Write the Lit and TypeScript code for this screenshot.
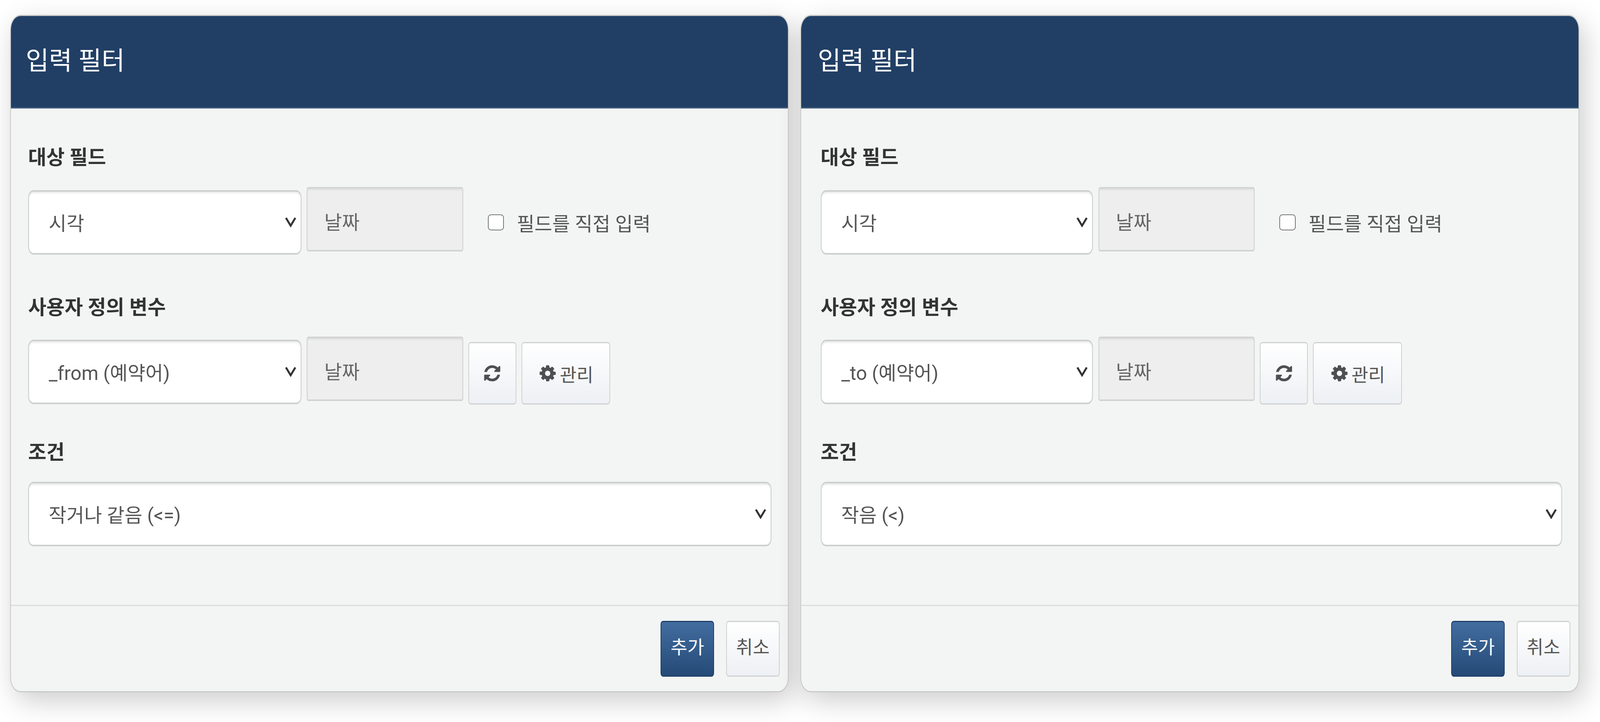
import { LitElement, html, css, svg } from "lit";
import { customElement, property } from "lit/decorators.js";

const refreshIcon = svg`<path d="M1639 1056q0 5-1 7-64 268-268 434.5t-478 166.5q-146 0-282.5-55t-243.5-157l-129 129q-19 19-45 19t-45-19-19-45v-448q0-26 19-45t45-19h448q26 0 45 19t19 45-19 45l-137 137q71 66 161 102t187 36q134 0 250-65t186-179q11-17 53-117 8-23 30-23h192q13 0 22.5 9.5t9.5 22.5zm25-800v448q0 26-19 45t-45 19h-448q-26 0-45-19t-19-45 19-45l138-138q-148-137-349-137-134 0-250 65t-186 179q-11 17-53 117-8 23-30 23h-199q-13 0-22.5-9.5t-9.5-22.5v-7q65-268 270-434.5t480-166.5q146 0 284 55.5t245 156.5l130-129q19-19 45-19t45 19 19 45z"/>`;
const cogIcon = svg`<path d="M1152 896q0-106-75-181t-181-75-181 75-75 181 75 181 181 75 181-75 75-181zm512-109v222q0 12-8 23t-20 13l-185 28q-19 54-39 91 35 50 107 138 10 12 10 25t-9 23q-27 37-99 108t-94 71q-12 0-26-9l-138-108q-44 23-91 38-16 136-29 186-7 28-36 28h-222q-14 0-24.5-8.5t-11.5-21.5l-28-184q-49-16-90-37l-141 107q-10 9-25 9-14 0-25-11-126-114-165-168-7-10-7-23 0-12 8-23 15-21 51-66.5t54-70.5q-27-50-41-99l-183-27q-13-2-21-12.5t-8-23.5v-222q0-12 8-23t19-13l186-28q14-46 39-92-40-57-107-138-10-12-10-24 0-10 9-23 26-36 98.5-107.5t94.5-71.5q13 0 26 10l138 107q44-23 91-38 16-136 29-186 7-28 36-28h222q14 0 24.5 8.5t11.5 21.5l28 184q49 16 90 37l142-107q9-9 24-9 13 0 25 10 129 119 165 170 7 8 7 22 0 12-8 23-15 21-51 66.5t-54 70.5q26 50 41 98l183 28q13 2 21 12.5t8 23.5z"/>`;

@customElement("filter-card")
class FilterCard extends LitElement {
  @property() variable = "";
  @property() condition = "";

  static styles = css`
    :host {
      --u: calc(100vw / 5966);
      --pad: calc(64 * var(--u));
      --sel: calc(1020 * var(--u));
      --gap: calc(19 * var(--u));
      --title: calc(55 * var(--u));
      display: flex;
      flex: none;
      flex-direction: column;
      box-sizing: border-box;
      width: calc(2903 * var(--u));
      height: 1735px;
      background: #f3f5f4;
      border-style: solid;
      border-color: #c9c9c9;
      border-width: 3px calc(3 * var(--u));
      border-radius: calc(38 * var(--u)) / 38px;
      box-shadow: calc(18 * var(--u)) 22px 70px rgba(0, 0, 0, 0.2);
      overflow: hidden;
      font-family: Roboto, "Noto Sans CJK KR", sans-serif;
    }
    :host([second]) {
      --pad: calc(73 * var(--u));
      --sel: calc(1015 * var(--u));
      --gap: calc(21 * var(--u));
      --title: calc(62 * var(--u));
      width: calc(2905 * var(--u));
    }
    .head {
      height: 237px;
      flex: none;
      box-sizing: border-box;
      background: #213f65;
      border-bottom: 3px solid #4a6485;
      color: #fff;
      font-size: calc(94 * var(--u));
      line-height: 230px;
      padding-left: var(--title);
    }
    .body {
      flex: 1;
      padding: 80px calc(61 * var(--u)) 0 var(--pad);
    }
    label.title {
      display: block;
      font-size: calc(74 * var(--u));
      font-weight: 700;
      padding-top: 12px;
      line-height: 68px;
      color: #333;
    }
    .row {
      display: flex;
      align-items: flex-start;
      margin-top: 41px;
      margin-bottom: 90px;
    }
    .row.tools {
      margin-top: 40px;
      margin-bottom: 77px;
    }
    .selwrap {
      position: relative;
      flex: none;
      width: var(--sel);
      margin-top: 8px;
      height: 165px;
    }
    .selwrap.full {
      width: auto;
      margin-top: 41px;
    }
    select {
      appearance: none;
      width: 100%;
      height: 100%;
      box-sizing: border-box;
      background: #fff;
      border-style: solid;
      border-color: #cdcfcf;
      border-width: 4px calc(4 * var(--u));
      border-radius: calc(20 * var(--u)) / 20px;
      box-shadow: inset 0 4px 4px rgba(0, 0, 0, 0.08);
      padding: 6px calc(80 * var(--u)) 0 calc(74 * var(--u));
      font-family: inherit;
      font-size: calc(72 * var(--u));
      color: #555;
    }
    .chev {
      position: absolute;
      right: calc(20 * var(--u));
      top: 68px;
      width: calc(41 * var(--u));
      height: 27px;
      fill: none;
      stroke: #333;
      stroke-width: 5;
      pointer-events: none;
    }
    .chev path {
      vector-effect: non-scaling-stroke;
    }
    input.val {
      box-sizing: border-box;
      flex: none;
      width: calc(583 * var(--u));
      height: 165px;
      margin-left: var(--gap);
      background: #eee;
      border-style: solid;
      border-color: #d2d3d3;
      border-width: 4px calc(4 * var(--u));
      border-radius: calc(7 * var(--u)) / 7px;
      box-shadow: inset 0 4px 4px rgba(0, 0, 0, 0.06);
      padding: 8px calc(62 * var(--u)) 0;
      font-family: inherit;
      font-size: calc(72 * var(--u));
      color: #666;
    }
    .check {
      display: flex;
      align-items: center;
      flex: none;
      margin: 8px 0 0 calc(92 * var(--u));
      height: 165px;
      font-size: calc(72 * var(--u));
      color: #555;
      white-space: nowrap;
    }
    .check input {
      appearance: none;
      flex: none;
      box-sizing: border-box;
      width: calc(60 * var(--u));
      height: calc(60 * var(--u));
      margin: 0 calc(48 * var(--u)) 0 0;
      background: #fff;
      border: calc(4 * var(--u)) solid #767676;
      border-radius: calc(12 * var(--u));
    }
    .btn {
      box-sizing: border-box;
      display: inline-flex;
      flex: none;
      align-items: center;
      justify-content: center;
      background: linear-gradient(#fff, #edf0f4);
      border-style: solid;
      border-color: #d0d1d1;
      border-width: 3px calc(3 * var(--u));
      border-radius: calc(9 * var(--u)) / 9px;
      color: #555;
      font-family: inherit;
      font-size: calc(68 * var(--u));
      padding: 0;
      white-space: nowrap;
    }
    .btn svg {
      fill: #4d4f50;
      flex: none;
      width: calc(70 * var(--u));
      height: calc(70 * var(--u));
    }
    .tool {
      margin: 14px 0 0 calc(19 * var(--u));
      height: 160px;
    }
    .tool.refresh {
      width: calc(179 * var(--u));
    }
    .tool.manage {
      width: calc(332 * var(--u));
      gap: calc(10 * var(--u));
    }
    .foot {
      flex: none;
      box-sizing: border-box;
      height: 221px;
      border-top: 3px solid #dcdddd;
      display: flex;
      justify-content: flex-end;
      gap: calc(44 * var(--u));
      padding: 38px calc(31 * var(--u)) 0 0;
    }
    .foot .btn {
      width: calc(200 * var(--u));
      height: 143px;
      padding-bottom: 16px;
    }
    .foot .btn.primary {
      background: linear-gradient(#426d9f, #254a77);
      border-color: #20406a;
      color: #fff;
    }
  `;

  private chevron() {
    return html`<svg class="chev" viewBox="0 0 41 27" preserveAspectRatio="none"><path d="M3 3 L20.5 23 L38 3" /></svg>`;
  }

  render() {
    return html`
      <div class="head">입력 필터</div>
      <div class="body">
        <label class="title">대상 필드</label>
        <div class="row">
          <div class="selwrap">
            <select><option>시각</option></select>${this.chevron()}
          </div>
          <input class="val" type="text" readonly value="날짜" />
          <label class="check"><input type="checkbox" />필드를 직접 입력</label>
        </div>
        <label class="title">사용자 정의 변수</label>
        <div class="row tools">
          <div class="selwrap">
            <select><option>${this.variable}</option></select>${this.chevron()}
          </div>
          <input class="val" type="text" readonly value="날짜" />
          <button class="btn tool refresh">
            <svg viewBox="0 0 1792 1792">${refreshIcon}</svg>
          </button>
          <button class="btn tool manage">
            <svg viewBox="0 0 1792 1792">${cogIcon}</svg>관리
          </button>
        </div>
        <label class="title">조건</label>
        <div class="selwrap full">
          <select><option>${this.condition}</option></select>${this.chevron()}
        </div>
      </div>
      <div class="foot">
        <button class="btn primary">추가</button>
        <button class="btn">취소</button>
      </div>
    `;
  }
}

@customElement("app-root")
class AppRoot extends LitElement {
  static styles = css`
    :host {
      --u: calc(100vw / 5966);
      display: block;
      background: #fff;
      height: 1849px;
      overflow: hidden;
    }
    .wrap {
      display: flex;
      gap: calc(43 * var(--u));
      padding: 38px 0 0 calc(38 * var(--u));
    }
  `;
  render() {
    return html`
      <div class="wrap">
        <filter-card variable="_from (예약어)" condition="작거나 같음 (<=)"></filter-card>
        <filter-card second variable="_to (예약어)" condition="작음 (<)"></filter-card>
      </div>
    `;
  }
}
